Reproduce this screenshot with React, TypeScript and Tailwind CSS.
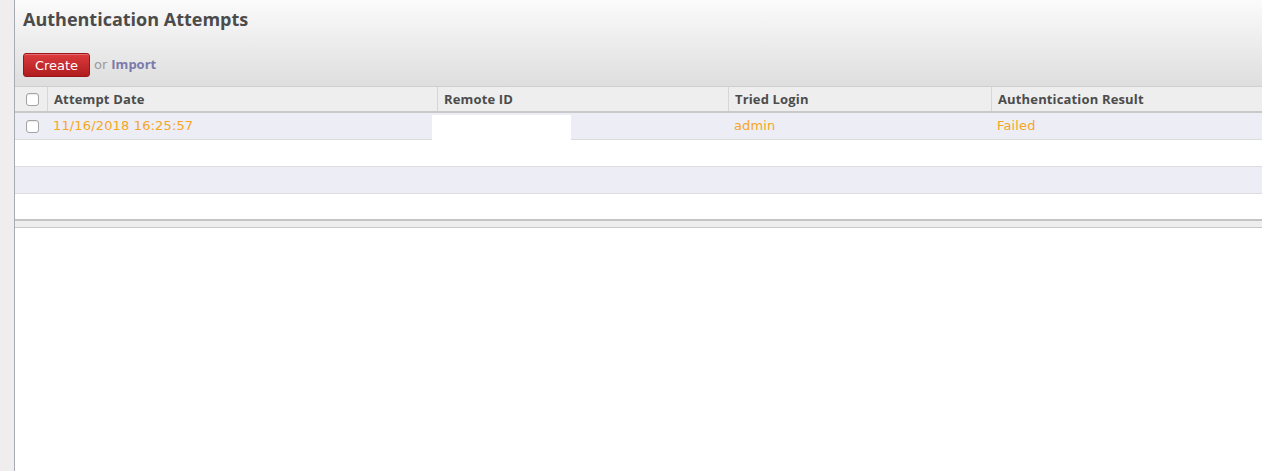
import React from 'react'

const font = { fontFamily: '"DejaVu Sans", "Liberation Sans", sans-serif' }
const boldFont = { fontFamily: '"Open Sans", "DejaVu Sans", sans-serif' }

const cols = 'grid grid-cols-[32px_390px_291px_263px_1fr]'

const Check: React.FC = () => (
  <span className="block w-[13px] h-[13px] rounded-[3px] border border-[#a3a3a3] bg-white shadow-[inset_0_1px_1px_rgba(0,0,0,0.08)]" />
)

const HeadCell: React.FC<{children?: React.ReactNode}> = ({children}) => (
  <div className="h-full flex items-center pl-[6px] pt-[2px] border-l border-[#d6d6d6]">{children}</div>
)

const rows = [
  { date: '11/16/2018 16:25:57', login: 'admin', result: 'Failed' },
  null,
  null,
  null,
]

export default function App() {
  return (
    <div className="flex w-[1262px] h-[471px] overflow-hidden bg-white text-[13px]" style={font}>
      <div className="w-[15px] shrink-0 bg-[#efeded] border-r border-[#a8abb3]" />
      <div className="flex-1 flex flex-col">
        <div className="h-[87px] bg-gradient-to-b from-[#fbfbfb] to-[#dedede] border-b border-[#d0d0d0] pl-[8px] pt-[6px]">
          <h1 className="text-[18px] font-bold text-[#4b4b4b] leading-[26px]" style={boldFont}>Authentication Attempts</h1>
          <div className="mt-[21px] flex items-center gap-[4px]">
            <button className="w-[67px] h-[24px] rounded-[3px] border border-[#9a1517] bg-gradient-to-b from-[#dc3b3d] to-[#b01c1e] text-white text-[13px] leading-none shadow-[inset_0_1px_0_rgba(255,255,255,0.25)]">Create</button>
            <span className="text-[#9a9a9a]">or</span>
            <span className="text-[#7b7aab] font-bold" style={boldFont}>Import</span>
          </div>
        </div>
        <div className={`${cols} h-[26px] bg-[#eeeeee] border-b-2 border-[#c9c9c9] font-bold text-[#4c4c4c] tracking-[0.15px]`} style={boldFont}>
          <div className="h-full flex items-center justify-center pl-[2px]"><Check /></div>
          <HeadCell>Attempt Date</HeadCell>
          <HeadCell>Remote ID</HeadCell>
          <HeadCell>Tried Login</HeadCell>
          <HeadCell>Authentication Result</HeadCell>
        </div>
        {rows.map((r, i) => (
          <div key={i} className={`${cols} ${i < 3 ? 'h-[27px] border-b border-[#dcdcdc]' : 'h-[25px]'} ${i % 2 === 0 ? 'bg-[#ededf6]' : 'bg-white'} text-[#f5a623] tracking-[0.15px]`}>
            <div className="h-full flex items-center justify-center pl-[2px]">{r && <Check />}</div>
            <div className="h-full flex items-center pl-[6px]">{r?.date}</div>
            <div className="relative h-full">
              {r && <div className="absolute left-[-5px] top-[2px] w-[139px] h-[26px] bg-white" />}
            </div>
            <div className="h-full flex items-center pl-[6px]">{r?.login}</div>
            <div className="h-full flex items-center pl-[6px]">{r?.result}</div>
          </div>
        ))}
        <div className="h-[9px] bg-[#eeeeee] border-t-2 border-b border-t-[#c4c4c4] border-b-[#c8c8c8]" />
        <div className="flex-1 bg-white" />
      </div>
    </div>
  )
}
